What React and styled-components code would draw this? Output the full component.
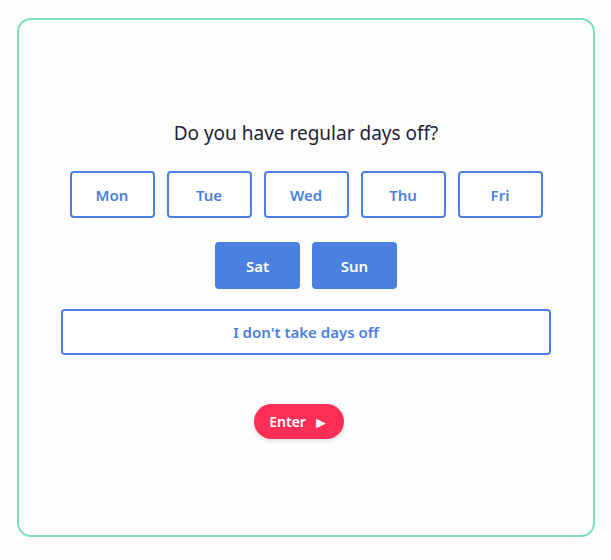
import React, { useState } from "react";
import styled, { createGlobalStyle } from "styled-components";

const Global = createGlobalStyle`
  html, body { margin: 0; padding: 0; background: #fdfdfd; }
  body { font-family: "Noto Sans", "Lato", sans-serif; }
  * { box-sizing: border-box; }
`;

const Page = styled.div`
  padding: 18px 16px 0 17px;
`;

const Card = styled.div`
  width: 578px;
  height: 519px;
  border: 2px solid #7ddfb7;
  border-radius: 14px;
  background: #fdfdfd;
  display: flex;
  flex-direction: column;
  align-items: center;
  padding-top: 101px;
`;

const Title = styled.h2`
  margin: 0;
  font-size: 19px;
  line-height: 24px;
  font-weight: 400;
  color: #1e1e36;
`;

const Days = styled.div`
  margin-top: 26px;
  width: 490px;
  display: flex;
  flex-wrap: wrap;
  justify-content: center;
  gap: 24px 12px;
`;

const DayButton = styled.button`
  width: 85px;
  height: 47px;
  border: 2px solid #4b7fe0;
  border-radius: 4px;
  background: ${(p) => (p.$active ? "#4b7fe0" : "#ffffff")};
  color: ${(p) => (p.$active ? "#ffffff" : "#4b7fe0")};
  font-family: inherit;
  font-size: 15px;
  font-weight: 600;
  cursor: pointer;
  padding: 0;
`;

const NoDays = styled(DayButton)`
  width: 490px;
  height: 46px;
  margin-top: 20px;
`;

const Enter = styled.button`
  margin-top: 49px;
  margin-right: 14px;
  width: 90px;
  height: 35px;
  border: none;
  border-radius: 18px;
  background: #ff2e57;
  color: #ffffff;
  font-family: inherit;
  font-size: 14px;
  font-weight: 600;
  box-shadow: 0 2px 4px rgba(0, 0, 0, 0.12);
  display: flex;
  align-items: center;
  justify-content: center;
  gap: 7px;
  padding: 0;
`;

const Arrow = styled.span`
  font-size: 16px;
  line-height: 1;
`;

const DAYS = ["Mon", "Tue", "Wed", "Thu", "Fri", "Sat", "Sun"];

export default function App() {
  const [selected, setSelected] = useState(["Sat", "Sun"]);
  const toggle = (d) =>
    setSelected((s) => (s.includes(d) ? s.filter((x) => x !== d) : [...s, d]));
  return (
    <>
      <Global />
      <Page>
        <Card>
          <Title>Do you have regular days off?</Title>
          <Days>
            {DAYS.map((d) => (
              <DayButton key={d} $active={selected.includes(d)} onClick={() => toggle(d)}>
                {d}
              </DayButton>
            ))}
          </Days>
          <NoDays>I don't take days off</NoDays>
          <Enter>
            Enter <Arrow>►</Arrow>
          </Enter>
        </Card>
      </Page>
    </>
  );
}
